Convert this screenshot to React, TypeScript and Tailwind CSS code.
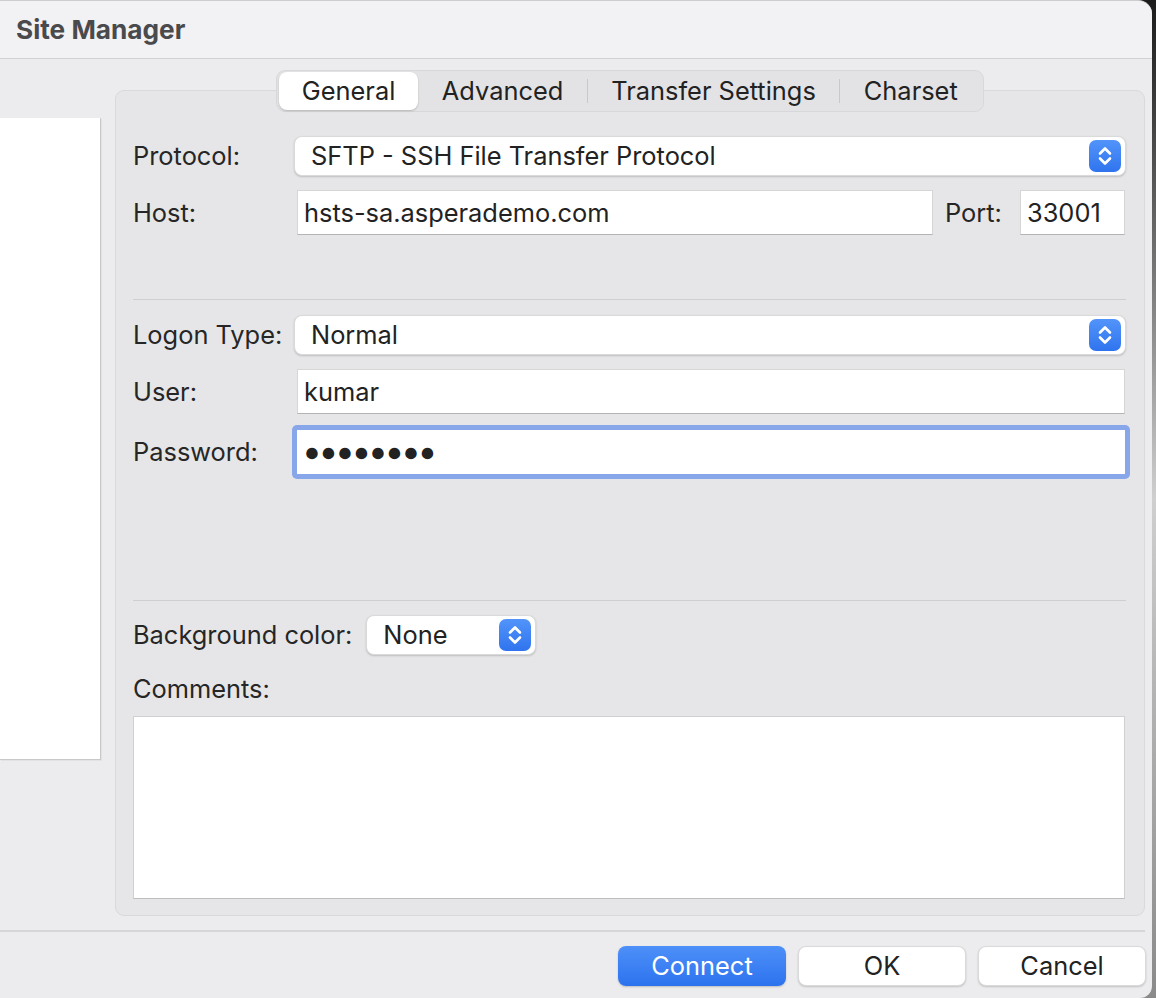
import React from 'react';

const font = { fontFamily: 'Inter, "Liberation Sans", sans-serif' };

function Stepper() {
  return (
    <div className="absolute right-[4px] top-1/2 flex h-[32px] w-[32px] -translate-y-1/2 items-center justify-center rounded-[7px] bg-linear-to-b from-[#5294fa] to-[#2f74ee]">
      <svg width="32" height="32" viewBox="0 0 32 32" fill="none" stroke="white" strokeWidth="2.6" strokeLinecap="round" strokeLinejoin="round">
        <path d="M11 13.5 L16 8.5 L21 13.5" />
        <path d="M11 18.5 L16 23.5 L21 18.5" />
      </svg>
    </div>
  );
}

function Select({ value, className }: { value: string; className?: string }) {
  return (
    <div
      className={`relative flex h-[40px] items-center rounded-[8px] border border-[#dadada] bg-white pl-[16px] text-[25.4px] text-[#222] shadow-[0_1px_2px_rgba(0,0,0,0.18)] ${className ?? ''}`}
    >
      {value}
      <Stepper />
    </div>
  );
}

function Field({ value, className }: { value: string; className?: string }) {
  return (
    <div
      className={`flex h-[45px] items-center border border-[#d6d6d6] border-b-[#b4b4b4] bg-white pl-[6px] text-[25.4px] text-[#222] ${className ?? ''}`}
    >
      {value}
    </div>
  );
}

function Label({ children }: { children: React.ReactNode }) {
  return <div className="w-[161px] shrink-0 text-[25.4px] text-[#262626]">{children}</div>;
}

const tabs = ['General', 'Advanced', 'Transfer Settings', 'Charset'];

export default function App() {
  return (
    <div
      className="h-[998px] w-[1156px] overflow-hidden bg-linear-to-b from-[#1c1c1c] via-[#cfcfcf] to-[#8a8a8a] leading-[36px]"
      style={font}
    >
      <div className="flex h-full w-[1152px] flex-col overflow-hidden rounded-tr-[14px] rounded-br-[12px] border-t border-[#cdcdcf] bg-[#ececee]">
        {/* title bar */}
        <div className="flex h-[58px] shrink-0 items-center border-b border-[#d2d2d4] bg-[#f2f2f4] pl-[16px] text-[26.2px] font-bold text-[#4a4a4c]">
          Site Manager
        </div>

        <div className="flex pt-[11px]">
          {/* site tree */}
          <div className="w-[115px] shrink-0 pt-[48px]">
            <div className="h-[642px] w-[101px] border-r border-b border-[#c9c9cb] bg-white shadow-[1px_1px_0_#e2e2e4]" />
          </div>

          {/* tabs + page */}
          <div className="flex w-[1030px] flex-col">
            <div className="relative z-10 -mb-[22px] flex justify-center">
              <div className="flex h-[42px] items-center rounded-[9px] border border-[#d8d8da] bg-[#e3e3e5] p-[2px] text-[25.4px] text-[#222]">
                {tabs.map((t, i) => (
                  <React.Fragment key={t}>
                    {i > 1 && <div className="h-[24px] w-px bg-[#c9c9cb]" />}
                    <div
                      className={
                        i === 0
                          ? 'flex h-[38px] items-center rounded-[8px] bg-white px-[23px] shadow-[0_1px_2px_rgba(0,0,0,0.2)]'
                          : 'flex h-[38px] items-center px-[23.5px]'
                      }
                    >
                      {t}
                    </div>
                  </React.Fragment>
                ))}
              </div>
            </div>

            <div className="flex h-[826px] flex-col rounded-[9px] border border-[#d9d9db] bg-[#e6e6e8] pr-[18px] pl-[17px] pt-[45px]">
              <div className="flex items-center">
                <Label>Protocol:</Label>
                <Select value="SFTP - SSH File Transfer Protocol" className="flex-1" />
              </div>

              <div className="mt-[14px] flex items-center pr-[1px]">
                <Label>Host:</Label>
                <Field value="hsts-sa.asperademo.com" className="ml-[3px] flex-1" />
                <div className="ml-[12px] w-[75px] text-[25.4px] text-[#262626]">Port:</div>
                <Field value="33001" className="w-[105px]" />
              </div>

              <div className="mt-[64px] h-px bg-[#cfcfd1]" />

              <div className="mt-[15px] flex items-center">
                <Label>Logon Type:</Label>
                <Select value="Normal" className="flex-1" />
              </div>

              <div className="mt-[14px] flex items-center pr-[1px]">
                <Label>User:</Label>
                <Field value="kumar" className="ml-[3px] h-[44px] flex-1" />
              </div>

              <div className="mt-[11px] flex items-center">
                <Label>Password:</Label>
                <div className="-ml-[2px] -mr-[4px] flex-1 rounded-[5px] bg-[#87a7ea] p-[5px]">
                  <div
                    className="flex h-[44px] items-center overflow-hidden bg-white pl-[7px] text-[26.5px] leading-none tracking-[0.5px] text-[#222]"
                    style={{ fontFamily: '"Liberation Sans", sans-serif' }}
                  >
                    ●●●●●●●●
                  </div>
                </div>
              </div>

              <div className="mt-[121px] h-px bg-[#cfcfd1]" />

              <div className="mt-[14px] flex items-center">
                <div className="mr-[14px] text-[25.4px] text-[#262626]">Background color:</div>
                <Select value="None" className="w-[170px]" />
              </div>

              <div className="mt-[16px] text-[25.4px] text-[#262626]">Comments:</div>

              <div className="mt-[9px] mr-[1px] h-[183px] border border-[#d0d0d2] border-b-[#bdbdbf] bg-white" />
            </div>
          </div>
        </div>

        <div className="mt-[14px] mr-[7px] h-[2px] bg-[#d6d6d8]" />

        <div className="flex justify-end gap-[12px] pt-[14px] pr-[6px] text-[25.4px]">
          <button className="h-[40px] w-[168px] rounded-[8px] bg-linear-to-b from-[#4d90f9] to-[#2d72ee] text-white shadow-[0_1px_2px_rgba(0,0,0,0.2)]">
            Connect
          </button>
          <button className="h-[40px] w-[168px] rounded-[8px] border border-[#dadada] bg-white text-[#222] shadow-[0_1px_2px_rgba(0,0,0,0.18)]">
            OK
          </button>
          <button className="h-[40px] w-[168px] rounded-[8px] border border-[#dadada] bg-white text-[#222] shadow-[0_1px_2px_rgba(0,0,0,0.18)]">
            Cancel
          </button>
        </div>
      </div>
    </div>
  );
}
